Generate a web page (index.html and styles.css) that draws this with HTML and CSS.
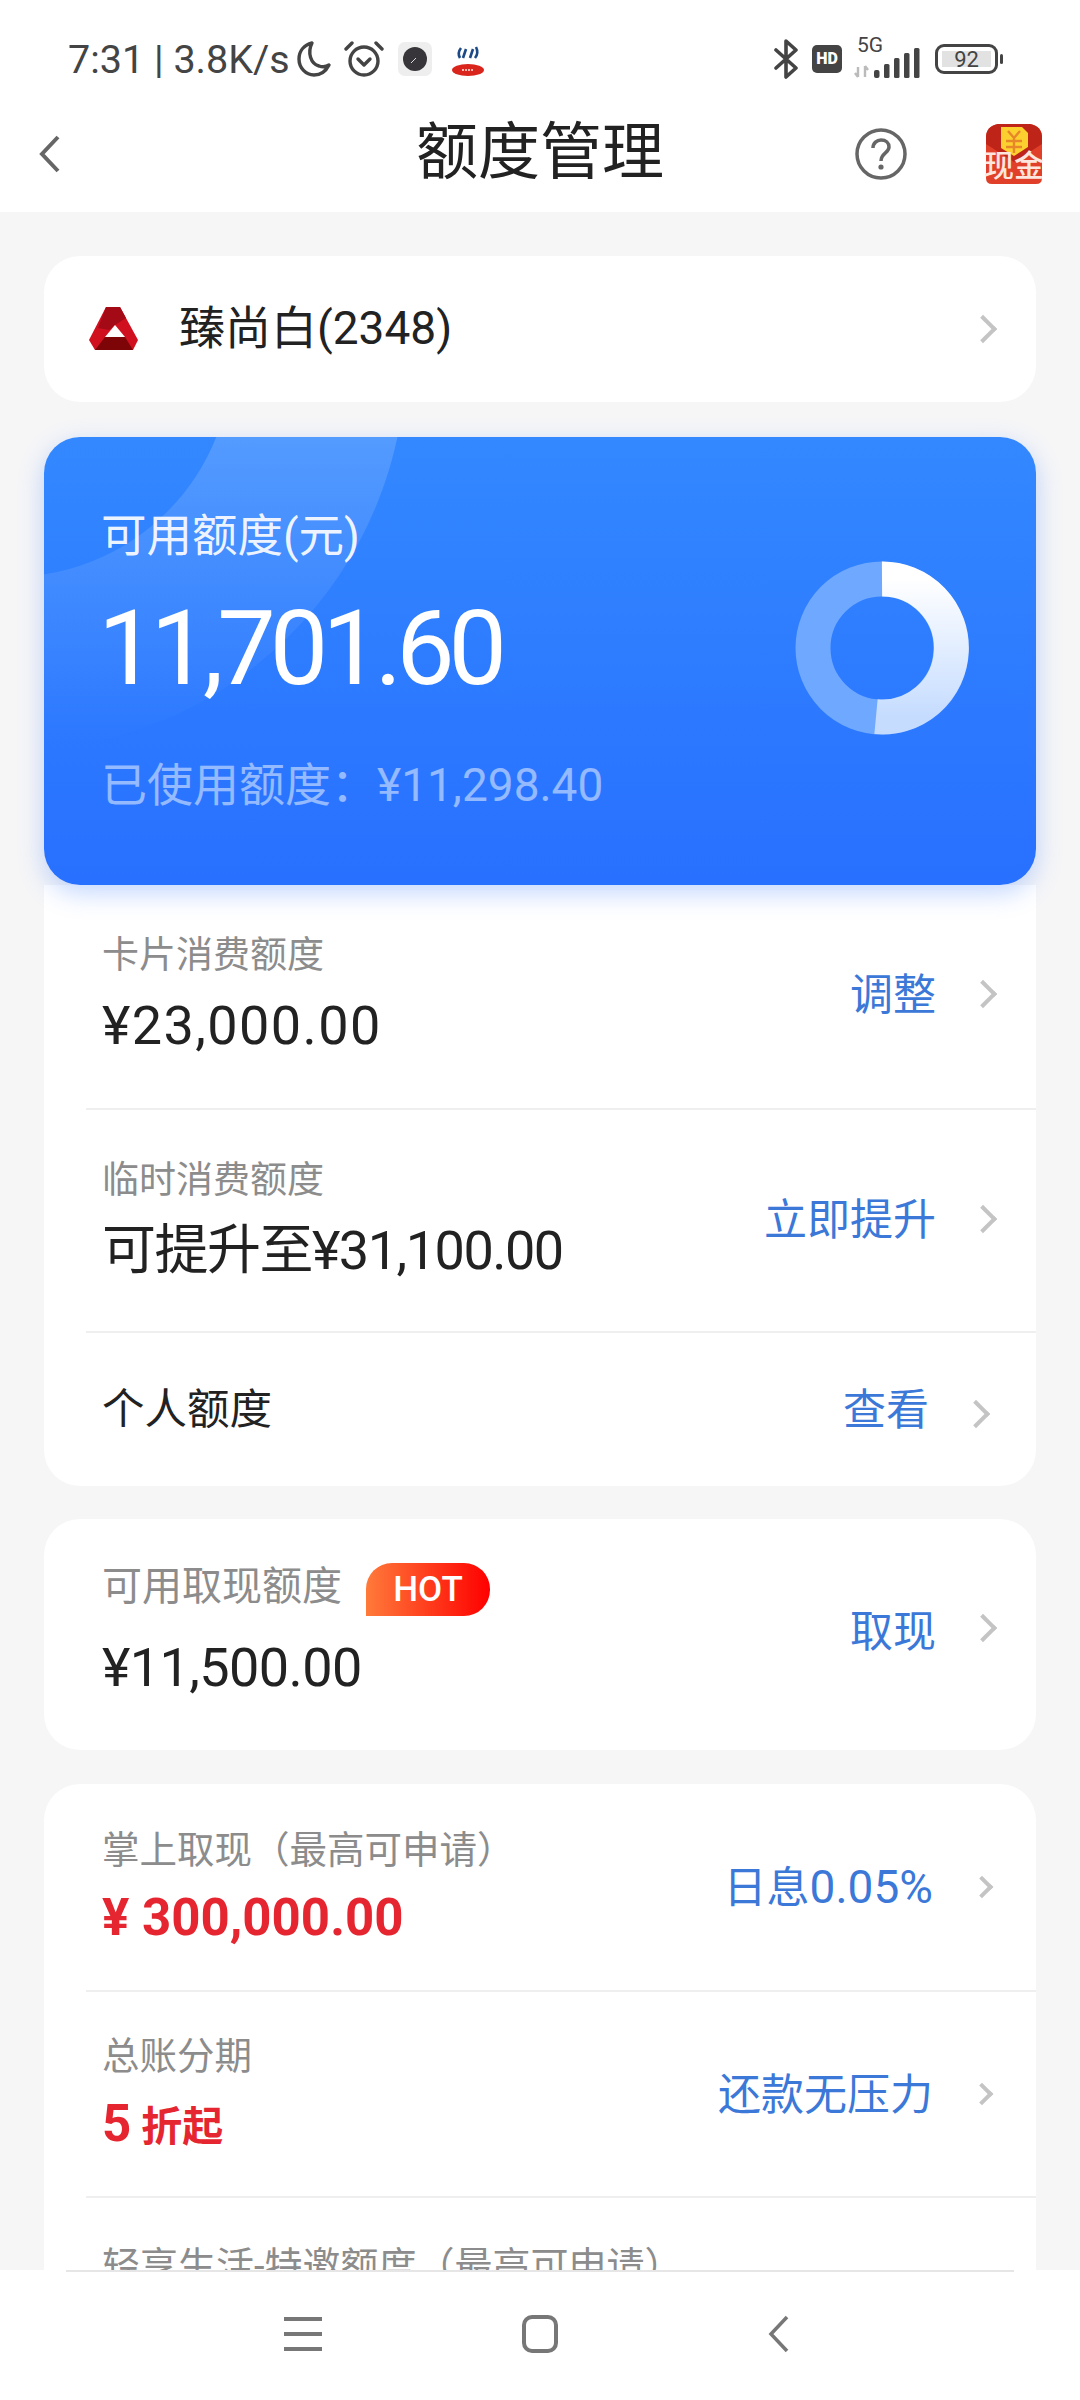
FILE: index.html
```html
<!DOCTYPE html>
<html lang="zh-CN">
<head>
    <meta charset="UTF-8">
    <meta name="viewport" content="width=device-width, initial-scale=1.0">
    <title>额度管理</title>
    <link rel="stylesheet" href="styles.css">
</head>
<body>
<div class="page">
    <div class="top">
        <div class="statusbar">
            <div class="status-left">
                <span class="status-text">7:31 | 3.8K/s</span>
                <svg class="ic-moon" width="36" height="38" viewBox="0 0 36 38"><path d="M16 3C8 5 3 11 3 19c0 9 7 16 15 16 7 0 12-4 15-10-3 2-7 2-10 1C15 24 11 13 16 3z" fill="none" stroke="#444" stroke-width="3.4" stroke-linejoin="round"/></svg>
                <svg class="ic-alarm" width="40" height="38" viewBox="0 0 40 38"><circle cx="20" cy="21" r="14" fill="none" stroke="#444" stroke-width="3.4"/><path d="M14 19l6 6 6-6" fill="none" stroke="#444" stroke-width="3.4" stroke-linecap="round" stroke-linejoin="round"/><path d="M2 9l6-6M38 9l-6-6" stroke="#444" stroke-width="3.4" stroke-linecap="round"/></svg>
                <svg class="ic-app" width="34" height="34" viewBox="0 0 34 34"><rect width="34" height="34" rx="7" fill="#eee"/><circle cx="17" cy="17" r="12" fill="#37353a"/><path d="M13 21l5-5" stroke="#ddd" stroke-width="1"/></svg>
                <svg class="ic-app2" width="32" height="30" viewBox="0 0 32 30"><path d="M9 2Q5 7 8 12M14 3L11 12M21 3l-3 9M24 1q3 6-1 11" fill="none" stroke="#1d4a86" stroke-width="2.600"/><ellipse cx="16" cy="24" rx="16" ry="6" fill="#d9251c"/><path d="M10 24h12" stroke="#f3b6b0" stroke-width="2" stroke-dasharray="2 1"/></svg>
            </div>
            <div class="status-right">
                <svg width="24" height="40" viewBox="0 0 24 40"><path d="M2 11l20 18-10 9V2l10 9L2 29" fill="none" stroke="#444" stroke-width="3.6" stroke-linejoin="round" stroke-linecap="round"/></svg>
                <span class="hd">HD</span>
                <div class="signal">
                    <span class="five-g">5G</span>
                    <svg width="66" height="32" viewBox="0 0 66 32"><path d="M4 20v10M1 26l3 4M11 30V19M11 19l3 4" fill="none" stroke="#bbb" stroke-width="2.400"/><rect x="20" y="23" width="5.500" height="8" rx="2" fill="#444"/><rect x="30" y="17" width="5.500" height="14" rx="1.500" fill="#444"/><rect x="40" y="11" width="5.500" height="20" rx="1.500" fill="#444"/><rect x="50" y="6" width="5.500" height="25" rx="1.500" fill="#444"/><rect x="60" y="1" width="5.500" height="30" rx="1.500" fill="#444"/></svg>
                </div>
                <div class="battery"><span class="battery-level">92</span></div>
                <span class="battery-tip"></span>
            </div>
        </div>
        <div class="titlebar">
            <svg class="back" width="24" height="38" viewBox="0 0 24 38"><path d="M20 2L4 19l16 17" fill="none" stroke="#666" stroke-width="4"/></svg>
            <h1>额度管理</h1>
            <svg class="help" width="52" height="52" viewBox="0 0 52 52"><circle cx="26" cy="26" r="24" fill="none" stroke="#666" stroke-width="3.500"/><path d="M18 20c0-5 4-8 8-8 5 0 8 3 8 7 0 6-8 6-8 14" fill="none" stroke="#666" stroke-width="3.500"/><circle cx="26" cy="39" r="2.600" fill="#666"/></svg>
            <div class="cash">
                <svg class="cash-env" width="56" height="60" viewBox="0 0 56 60"><path d="M12 0h32q12 2 12 14v40q0 6-6 6H6q-6 0-6-6V14Q0 2 12 0z" fill="#e0402a"/><path d="M12 0h32q12 2 12 14v6L28 38 0 20v-6Q0 2 12 0z" fill="#bf2418"/><path d="M15 3h21l6 6v14l-14 9-13-8z" fill="#fcd12f"/><path d="M22 7l6 7 6-7M20 17h16M20 23h16M28 14v15" fill="none" stroke="#e8862a" stroke-width="2.400"/></svg>
                <span class="cash-text">现金</span>
            </div>
        </div>
    </div>

    <main>
        <a class="card bank">
            <svg width="50" height="44" viewBox="0 0 50 44">
                <path d="M17 0h14l18 33-5 10H6L0 33z" fill="#d0101f"/>
                <path d="M17 0h14l6 11-11 7-6 5-11-2z" fill="#a30a16"/>
                <path d="M16 30h20l8 13H6z" fill="#7d0508"/>
                <path d="M26 18l10 12H16z" fill="#fff"/>
            </svg>
            <span class="bank-name">臻尚白(2348)</span>
            <span class="chev"></span>
        </a>

        <div class="quota">
            <svg class="quota-rings" width="992" height="448" viewBox="0 0 992 448">
                <defs><linearGradient id="ringFade" gradientUnits="userSpaceOnUse" x1="0" y1="0" x2="0" y2="310"><stop offset="0" stop-color="#fff" stop-opacity=".16"/><stop offset="1" stop-color="#fff" stop-opacity="0"/></linearGradient></defs>
                <circle cx="-34" cy="-82" r="309" fill="none" stroke="url(#ringFade)" stroke-width="174"/>
            </svg>
            <div class="quota-info">
                <div class="quota-label">可用额度(元)</div>
                <div class="quota-num">11,701.60</div>
                <div class="quota-used">已使用额度：¥11,298.40</div>
            </div>
            <svg class="donut" width="174" height="174" viewBox="0 0 174 174">
                <defs><linearGradient id="donutFade" x1="0" y1="0" x2="0" y2="1"><stop offset="0" stop-color="#fff"/><stop offset="1" stop-color="#fff" stop-opacity=".6"/></linearGradient></defs>
                <circle cx="87" cy="87" r="69" fill="none" stroke="#6fa8ff" stroke-width="35"/>
                <path d="M87 18A69 69 0 1 1 81 155.700" fill="none" stroke="url(#donutFade)" stroke-width="35"/>
            </svg>
        </div>

        <div class="card list first-list">
            <div class="row row-a">
                <div class="row-main"><div class="label">卡片消费额度</div><div class="value wide">¥23,000.00</div></div>
                <span class="action">调整</span><span class="chev"></span>
            </div>
            <div class="row row-a">
                <div class="row-main"><div class="label">临时消费额度</div><div class="value tight">可提升至¥31,100.00</div></div>
                <span class="action">立即提升</span><span class="chev"></span>
            </div>
            <div class="row row-b">
                <div class="row-main"><div class="value plain">个人额度</div></div>
                <span class="action">查看</span><span class="chev"></span>
            </div>
        </div>

        <div class="card list">
            <div class="row row-c">
                <div class="row-main">
                    <div class="label">可用取现额度<span class="hot">HOT</span></div>
                    <div class="value cash-value">¥11,500.00</div>
                </div>
                <span class="action">取现</span><span class="chev"></span>
            </div>
        </div>

        <div class="card list last-list">
            <div class="row row-d">
                <div class="row-main"><div class="label">掌上取现（最高可申请）</div><div class="value red">¥ 300,000.00</div></div>
                <span class="action">日息<span class="rate-num">0.05%</span></span><span class="chev small"></span>
            </div>
            <div class="row row-d">
                <div class="row-main"><div class="label">总账分期</div><div class="value red">5<span class="red-unit">折起</span></div></div>
                <span class="action">还款无压力</span><span class="chev small"></span>
            </div>
            <div class="row row-last">
                <div class="row-main"><div class="label">轻享生活-特邀额度（最高可申请）</div></div>
            </div>
        </div>
    </main>

    <nav class="navbar">
        <svg class="nav-menu" width="40" height="36" viewBox="0 0 40 36"><path d="M1 3h38M1 18h38M1 33h38" stroke="#777" stroke-width="4"/></svg>
        <svg class="nav-home" width="36" height="38" viewBox="0 0 36 38"><rect x="2" y="2" width="32" height="34" rx="8" fill="none" stroke="#777" stroke-width="4"/></svg>
        <svg class="nav-back" width="22" height="38" viewBox="0 0 22 38"><path d="M19 2L3 19l16 17" fill="none" stroke="#777" stroke-width="3.500"/></svg>
    </nav>
</div>
</body>
</html>
```

FILE: styles.css
```css
* {
    box-sizing: border-box;
}

body {
    margin: 0;
    background-color: #f6f6f7;
    color: #222;
    font-family: Roboto, "Noto Sans CJK SC", sans-serif;
}

.page {
    height: 2400px;
    display: flex;
    flex-direction: column;
    overflow: hidden;
}

.top {
    height: 212px;
    background-color: #fff;
    flex: none;
}

.statusbar {
    height: 96px;
    padding: 22px 77px 0 68px;
    display: flex;
    justify-content: space-between;
    align-items: center;
    color: #444;
}

.status-left,
.status-right {
    display: flex;
    align-items: center;
}

.status-text {
    font-size: 39.5px;
    white-space: pre;
}

.ic-moon {
    margin-left: 6px;
}

.ic-alarm {
    margin-left: 12px;
}

.ic-app {
    margin-left: 14px;
}

.ic-app2 {
    margin-left: 20px;
    margin-top: 4px;
}

.hd {
    width: 30px;
    height: 28px;
    margin-left: 14px;
    background-color: #444;
    border-radius: 5px;
    color: #fff;
    font-size: 16px;
    font-weight: 900;
    line-height: 28px;
    text-align: center;
}

.signal {
    position: relative;
    width: 66px;
    height: 40px;
    margin-left: 12px;
    display: flex;
    align-items: flex-end;
}

.five-g {
    position: absolute;
    left: 3px;
    top: -5px;
    font-size: 21px;
    line-height: 22px;
}

.battery {
    width: 63px;
    height: 30px;
    margin-left: 15px;
    padding: 4px;
    border: 3px solid #444;
    border-radius: 9px;
}

.battery-level {
    display: block;
    height: 16px;
    background-color: #e2e2e2;
    font-size: 22px;
    line-height: 17px;
    text-align: center;
}

.battery-tip {
    width: 3px;
    height: 10px;
    margin-left: 2px;
    background-color: #444;
    border-radius: 2px;
}

.titlebar {
    height: 116px;
    padding-left: 38px;
    position: relative;
    display: flex;
    align-items: center;
}

h1 {
    position: absolute;
    left: 416px;
    top: 17px;
    margin: 0;
    font-size: 62px;
    font-weight: 400;
    line-height: 80px;
    color: #222;
}

.help {
    margin-left: 793px;
}

.cash {
    position: relative;
    width: 56px;
    height: 60px;
    margin-left: 79px;
}

.cash-env {
    display: block;
}

.cash-text {
    position: absolute;
    left: -2px;
    top: 24px;
    font-size: 30px;
    font-weight: 500;
    line-height: 36px;
    color: #fde6de;
    white-space: nowrap;
}

main {
    flex: 1;
    min-height: 0;
    padding: 44px 44px 0;
    overflow: hidden;
    position: relative;
}

.card {
    background-color: #fff;
    border-radius: 36px;
}

.bank {
    height: 146px;
    padding: 0 43px 0 45px;
    display: flex;
    align-items: center;
}

.bank-name {
    flex: 1;
    margin-left: 40px;
    margin-bottom: 10px;
    font-size: 46px;
}

.chev {
    flex: none;
    width: 20px;
    height: 20px;
    margin-left: 37px;
    border-top: 4px solid #c4c4c4;
    border-right: 4px solid #c4c4c4;
    transform: rotate(45deg);
}

.chev.small {
    width: 16px;
    height: 16px;
    margin-left: 41px;
}

.quota {
    position: relative;
    z-index: 1;
    height: 448px;
    margin-top: 35px;
    padding: 72px 0 0 57px;
    border-radius: 36px;
    background: linear-gradient(#3388ff, #2870ff);
    box-shadow: 0 8px 26px rgba(40, 112, 255, 0.28);
    color: #fff;
    display: flex;
}

.quota-rings {
    position: absolute;
    left: 0;
    top: 0;
    border-radius: 36px;
}

.quota-info {
    position: relative;
    flex: 1;
}

.quota-label {
    font-size: 45.5px;
    line-height: 56px;
    color: rgba(255, 255, 255, 0.92);
}

.quota-num {
    margin-top: 24px;
    margin-left: -3px;
    font-size: 104px;
    line-height: 120px;
    letter-spacing: -6px;
}

.quota-used {
    margin-top: 48px;
    font-size: 46px;
    line-height: 56px;
    color: rgba(255, 255, 255, 0.5);
}

.donut {
    position: absolute;
    left: 751px;
    top: 124px;
}

.list {
    margin-top: 33px;
    padding-left: 42px;
}

.first-list {
    margin-top: 0;
    border-radius: 0 0 36px 36px;
}

.last-list {
    margin-top: 34px;
}

.row {
    display: flex;
    align-items: center;
    padding-left: 16px;
    padding-right: 43px;
    border-top: 2px solid #efefef;
}

.row:first-child {
    border-top: none;
}

.row-a {
    height: 223px;
    padding-bottom: 4px;
}

.row-a:first-child {
    padding-bottom: 6px;
}

.row-a .action {
    margin-bottom: 6px;
}

.row-b {
    height: 155px;
    padding-right: 50px;
}

.row-b .action {
    margin-bottom: 8px;
}

.row-b .chev {
    margin-top: 8px;
}

.row-c {
    height: 231px;
    padding-bottom: 14px;
}

.row-c .value {
    margin-top: 22px;
}

.row-d {
    height: 206px;
    padding-right: 46px;
}

.row-d .value {
    margin-top: 14px;
}

.row-d .label {
    font-size: 37.5px;
}

.row-d .action {
    margin-bottom: 7px;
}

.row-last {
    height: 120px;
    padding-top: 44px;
    align-items: flex-start;
}

.row-last .label {
    font-size: 38px;
}

.row-main {
    flex: 1;
    min-width: 0;
}

.label {
    display: flex;
    align-items: center;
    font-size: 37px;
    line-height: 48px;
    color: #8c8c8c;
}

.row-c .label {
    font-size: 40px;
}

.value {
    margin-top: 16px;
    font-size: 54px;
    line-height: 60px;
    color: #222;
}

.value.wide {
    letter-spacing: 1.4px;
}

.value.tight {
    letter-spacing: -1.5px;
}

.value.cash-value {
    letter-spacing: -0.6px;
}

.value.plain {
    margin-top: 0;
    font-size: 42.5px;
}

.value.red {
    font-size: 51px;
    font-weight: 700;
    color: #e5252f;
}

.red-unit {
    margin-left: 10px;
    font-size: 41px;
}

.action {
    font-size: 43px;
    color: #3b78d8;
}

.rate-num {
    font-size: 46px;
}

.hot {
    width: 124px;
    height: 53px;
    margin-left: 24px;
    margin-top: 5px;
    border-radius: 26px 26px 26px 0;
    background: linear-gradient(90deg, #ff7a3a, #fe0000);
    color: #fff;
    font-size: 35px;
    font-weight: 500;
    line-height: 53px;
    text-align: center;
}

.navbar {
    flex: none;
    height: 130px;
    padding: 0 0 2px 283px;
    background-color: #fff;
    position: relative;
    display: flex;
    align-items: center;
}

.navbar::before {
    content: "";
    position: absolute;
    left: 66px;
    right: 66px;
    top: 0;
    height: 2px;
    background-color: #e6e6e6;
}

.nav-home {
    margin-left: 199px;
}

.nav-back {
    margin-left: 210px;
}
```
